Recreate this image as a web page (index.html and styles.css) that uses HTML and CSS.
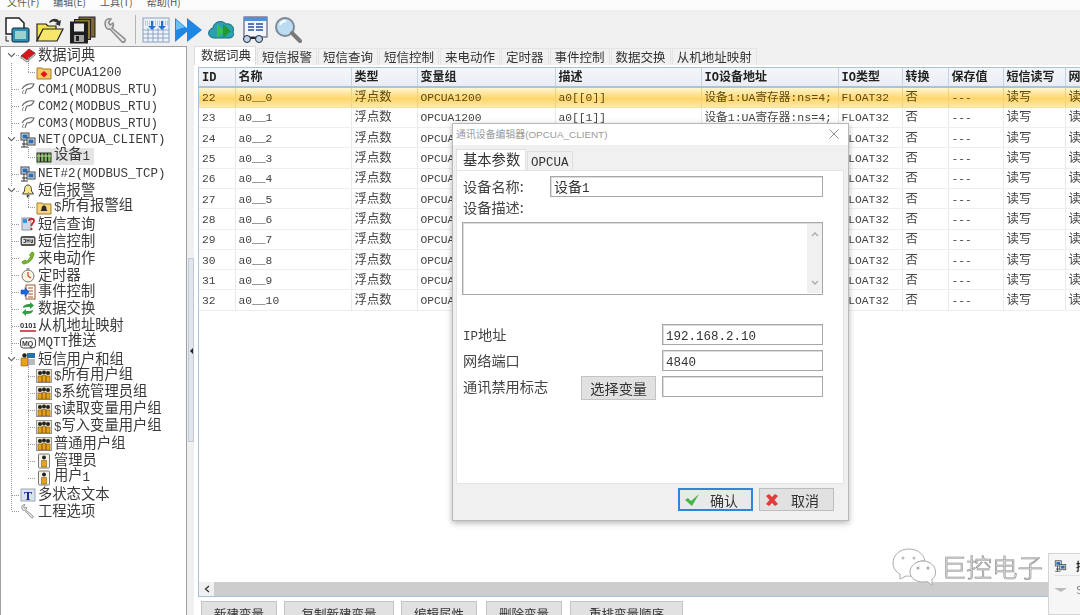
FILE: index.html
```html
<!DOCTYPE html>
<html>
<head>
<meta charset="utf-8">
<title>工程管理器</title>
<link rel="stylesheet" href="styles.css">
</head>
<body>

<svg class="defs" width="0" height="0">
  <defs>
    <symbol id="i-book" viewBox="0 0 16 16"><path d="M1 9 9 2l6 4-8 7z" fill="#d8141c" stroke="#7a1015" stroke-width=".7"/><path d="M1 9v2l6 4 8-7V6l-8 7z" fill="#e9e4d8" stroke="#555" stroke-width=".7"/></symbol>
    <symbol id="i-folder-red" viewBox="0 0 16 16"><path d="M1 4h5l1 1h8v10H1z" fill="#f5c862" stroke="#a9792a"/><path d="M8 7l3.500 3L8 13.500 4.500 10z" fill="#e0141c"/></symbol>
    <symbol id="i-folder-bell" viewBox="0 0 16 16"><path d="M1 4h5l1 1h8v10H1z" fill="#f5d67a" stroke="#a9792a"/><path d="M8 6.500c2 0 2.500 2 2.500 4l1 1.500h-7l1-1.500c0-2 .5-4 2.500-4z" fill="#2b2b2b"/></symbol>
    <symbol id="i-com" viewBox="0 0 16 16"><path d="M2 8c2-4 7-6 12-5-1 3-4 5-7 5-1 1-1 3-2 5" fill="#fff" stroke="#666" stroke-width="1.100"/><path d="M3 13c-1-2 0-3 1-4" fill="none" stroke="#777"/></symbol>
    <symbol id="i-net" viewBox="0 0 16 16"><rect x="1" y="1" width="8" height="7" fill="#dfe6ee" stroke="#444"/><rect x="2.500" y="2.500" width="5" height="4" fill="#2a6fb5"/><rect x="7" y="6" width="8" height="7" fill="#dfe6ee" stroke="#444"/><rect x="8.500" y="7.500" width="5" height="4" fill="#2a6fb5"/><path d="M2 12h5M4 8v7M1 15h7" stroke="#333" fill="none"/></symbol>
    <symbol id="i-dev" viewBox="0 0 16 16"><rect x="1" y="4" width="14" height="9" fill="#7fb35c" stroke="#333"/><path d="M4.500 4v9M8 4v9M11.500 4v9" stroke="#222" stroke-width="1.200"/><path d="M1 7h14" stroke="#b9dca0"/></symbol>
    <symbol id="i-bell" viewBox="0 0 16 16"><path d="M8 2c3 0 3.500 3 3.500 6l2 3h-11l2-3c0-3 .5-6 3.500-6z" fill="#f7e58a" stroke="#444"/><circle cx="8" cy="13" r="1.500" fill="#444"/></symbol>
    <symbol id="i-query" viewBox="0 0 16 16"><rect x="2" y="2" width="9" height="12" fill="#cfd9e6" stroke="#8896a8"/><rect x="3" y="3" width="4" height="4" fill="#3f8fd8"/><path d="M9 5c0-3 5-3 5 0 0 2-2.500 2-2.500 5M11.500 12v2" fill="none" stroke="#d0202a" stroke-width="1.800"/></symbol>
    <symbol id="i-cmd" viewBox="0 0 16 16"><rect x=".5" y="3" width="15" height="10" rx="2" fill="#555"/><rect x="2" y="5" width="12" height="6" fill="#ddd"/><path d="M3.500 6.500h2v3h-2M7 9.500v-3l1 1.500 1-1.500v3M11 6.500v3h1.500v-3" fill="none" stroke="#222" stroke-width=".8"/></symbol>
    <symbol id="i-phone" viewBox="0 0 16 16"><path d="M12 2c1 0 2 1 2 2-1 6-5 9-10 10-1 0-2-1-2-2l3-2 1.500 1c2-1 3-2.500 4-4.500L9.500 5z" fill="#76b82a" stroke="#4c8419" stroke-width=".7"/></symbol>
    <symbol id="i-clock" viewBox="0 0 16 16"><circle cx="8" cy="9" r="6" fill="#fdf6e2" stroke="#777"/><path d="M8 9V5M8 9l3 2" stroke="#d0402a" stroke-width="1.200"/><rect x="6.500" y="1" width="3" height="2" fill="#999"/></symbol>
    <symbol id="i-event" viewBox="0 0 16 16"><rect x="6" y="1" width="9" height="14" fill="#fff" stroke="#a0542a"/><path d="M8 4h5M8 7h5M8 10h5M8 13h5" stroke="#a0542a"/><path d="M1 6h4V3.500L9 8l-4 4.500V10H1z" fill="#1a6ae0" stroke="#0e3f91" stroke-width=".5"/></symbol>
    <symbol id="i-swap" viewBox="0 0 16 16"><path d="M3 7c0-3 3-4 7-4V1l4 3.500L10 8V6C7 6 5 6 3 7z" fill="#2ea043"/><path d="M13 9c0 3-3 4-7 4v2L2 11.500 6 8v2c3 0 5 0 7-1z" fill="#2ea043"/></symbol>
    <symbol id="i-bits" viewBox="0 0 16 16"><text x="0" y="10" font-family="Liberation Sans" font-size="7.500" font-weight="700" fill="#333">0101</text><path d="M0 13h16" stroke="#c0202a" stroke-width="1.500"/></symbol>
    <symbol id="i-mq" viewBox="0 0 16 16"><rect x=".5" y="3" width="15" height="10" rx="3" fill="#fff" stroke="#444"/><text x="2" y="11" font-family="Liberation Sans" font-size="7" font-weight="700" fill="#333">MQ</text></symbol>
    <symbol id="i-usergroup" viewBox="0 0 16 16"><rect x=".5" y="1.500" width="15" height="13" fill="#efe7cf" stroke="#999"/><circle cx="4" cy="5" r="2" fill="#222"/><circle cx="8" cy="4.500" r="2" fill="#222"/><circle cx="12" cy="5" r="2" fill="#222"/><path d="M2 8h4v6H2zM6 7.500h4V14H6zM10 8h4v6h-4z" fill="#e8a21a" stroke="#6b4a10" stroke-width=".5"/></symbol>
    <symbol id="i-user" viewBox="0 0 16 16"><rect x="2.500" y="1" width="11" height="14" rx="1" fill="#f6f3e8" stroke="#777"/><circle cx="8" cy="4.500" r="2" fill="#222"/><path d="M5.500 7.500h5V14h-5z" fill="#e8a21a" stroke="#6b4a10" stroke-width=".5"/></symbol>
    <symbol id="i-users" viewBox="0 0 16 16"><rect x="7" y="2" width="8" height="5" fill="#2a6fb5"/><path d="M8 9h7M8 11h7M8 13h7" stroke="#777"/><circle cx="4.500" cy="4.500" r="2.200" fill="#222"/><path d="M1 7h7v8H1z" fill="#e8a21a" stroke="#6b4a10" stroke-width=".5"/></symbol>
    <symbol id="i-text" viewBox="0 0 16 16"><rect x="1" y="2" width="14" height="12" fill="#d9e2ee" stroke="#9aa8ba"/><text x="4" y="12.500" font-family="Liberation Serif" font-size="12" font-weight="700" fill="#10207a">T</text></symbol>
    <symbol id="i-wrench" viewBox="0 0 28 28"><path d="M3 7c0-3 3-5 6-4L6.500 6.500 8 9l3-2c1 2 0 4-1 5l13 11c1 2-1 4-3 3L8 13C5 14 3 11 3 7z" fill="#e3e3e3" stroke="#8a8a8a" stroke-width="1.500"/></symbol>
  </defs>
</svg>

<div class="menu">
  <span>文件(F)</span><span>编辑(E)</span><span>工具(T)</span><span>帮助(H)</span>
</div>

<div class="toolbar">
  <svg class="tool" viewBox="0 0 28 28"><path d="M3 2h13l5 5v11H3z" fill="#fff" stroke="#222" stroke-width="1.500"/><path d="M3 20v5h3" fill="none" stroke="#222"/><rect x="9" y="12" width="17" height="14" rx="1.500" fill="#2f8fb0" stroke="#123"/><rect x="12" y="15" width="11" height="8" fill="#9bd2cf"/></svg>
  <svg class="tool" viewBox="0 0 28 28"><path d="M1 8h9l2 2h8v4H7L1 24z" fill="#f3e24f" stroke="#222" stroke-width="1.200"/><path d="M7 13h20l-6 12H1z" fill="#f6e66a" stroke="#222" stroke-width="1.200"/><path d="M13 6c3-4 8-4 10-1l2-1-1 6-5-2 2-1c-2-2-5-2-7 0" fill="#333"/></svg>
  <svg class="tool" viewBox="0 0 28 28"><rect x="10" y="1" width="16" height="20" fill="#7a6a2a" stroke="#222"/><rect x="5.500" y="3.500" width="16" height="20" fill="#8d7b30" stroke="#222"/><rect x="1.500" y="6" width="17" height="21" fill="#1e1e1e" stroke="#222"/><rect x="5" y="7.500" width="10" height="8" fill="#e8e8e8"/><rect x="5" y="19" width="10" height="7" fill="#a3a3a3"/><rect x="7" y="20" width="3" height="5" fill="#222"/></svg>
  <svg class="tool"><use href="#i-wrench"/></svg>
  <span class="tool-sep"></span>
  <svg class="tool" viewBox="0 0 28 28"><rect x="1" y="2" width="26" height="24" fill="#eef3fb" stroke="#8aa0c0"/><path d="M1 7h26" stroke="#b8c6da" stroke-dasharray="1 1" stroke-width="5"/><path d="M1 14h26M1 18h26M1 22h26M6 12v14M11 12v14M16 12v14M21 12v14" stroke="#7c94b8" stroke-width=".8"/><path d="M9 5v5h-3l4 4 4-4h-3V5zM19 5v5h-3l4 4 4-4h-3V5z" fill="#2270d0"/></svg>
  <svg class="tool" viewBox="0 0 28 28"><path d="M0 2l14 12L0 26z" fill="#1e86e4"/><path d="M12 2l15 12-15 12z" fill="#1e86e4"/><path d="M1 4l9 7-9 3z" fill="#6cc1f4"/></svg>
  <svg class="tool" viewBox="0 0 28 28"><path d="M6 22c-7 0-7-9-1-10 0-6 9-9 13-4 5-1 9 3 7 8 2 4-1 6-4 6z" fill="#2aa0b0" stroke="#156f80"/><path d="M9 8l8 7-8 7z" fill="#38c048"/><path d="M15 8l8 7-8 7z" fill="#1f9a33"/></svg>
  <svg class="tool" viewBox="0 0 28 28"><rect x="3" y="1" width="23" height="20" fill="#f2f5fb" stroke="#446"/><rect x="3" y="1" width="23" height="4" fill="#4f8fdc"/><path d="M7 8h6M15 8h7M7 11h6M15 11h7M7 14h6M15 14h7" stroke="#2a4fa0" stroke-width="1.500"/><circle cx="6" cy="23" r="3.500" fill="#b8d4ea" stroke="#223"/><circle cx="18" cy="23" r="3.500" fill="#b8d4ea" stroke="#223"/><path d="M9.500 22h5" stroke="#223" stroke-width="2"/></svg>
  <svg class="tool" viewBox="0 0 28 28"><circle cx="11" cy="11" r="9" fill="#bcdcf4" stroke="#7b8a98" stroke-width="2"/><path d="M6 9c1-3 4-4 6-4" stroke="#fff" stroke-width="2" fill="none"/><path d="M18 17l8 8" stroke="#7a7a7a" stroke-width="4" stroke-linecap="round"/></svg>
</div>

<div class="workspace">
  <div class="sidebar">
    <div class="tree">
      <div class="row"><span class="conn"><svg class="chev" viewBox="0 0 8 8"><path d="M1 2l3 3 3-3" fill="none" stroke="#666"/></svg></span><svg class="ti"><use href="#i-book"/></svg><span class="tx">数据词典</span></div>
      <div class="children c2">
        <div class="row sub"><span class="conn"></span><svg class="ti"><use href="#i-folder-red"/></svg><span class="tx"><span class="lat">OPCUA1200</span></span></div>
      </div>
      <div class="row"><span class="conn"></span><svg class="ti"><use href="#i-com"/></svg><span class="tx"><span class="lat">COM1(MODBUS_RTU)</span></span></div>
      <div class="row"><span class="conn"></span><svg class="ti"><use href="#i-com"/></svg><span class="tx"><span class="lat">COM2(MODBUS_RTU)</span></span></div>
      <div class="row"><span class="conn"></span><svg class="ti"><use href="#i-com"/></svg><span class="tx"><span class="lat">COM3(MODBUS_RTU)</span></span></div>
      <div class="row"><span class="conn"><svg class="chev" viewBox="0 0 8 8"><path d="M1 2l3 3 3-3" fill="none" stroke="#666"/></svg></span><svg class="ti"><use href="#i-net"/></svg><span class="tx"><span class="lat">NET(OPCUA_CLIENT)</span></span></div>
      <div class="children c2">
        <div class="row sub"><span class="conn"></span><span class="sel"><svg class="ti"><use href="#i-dev"/></svg><span class="tx">设备<span class="lat">1</span></span></span></div>
      </div>
      <div class="row"><span class="conn"></span><svg class="ti"><use href="#i-net"/></svg><span class="tx"><span class="lat">NET#2(MODBUS_TCP)</span></span></div>
      <div class="row"><span class="conn"><svg class="chev" viewBox="0 0 8 8"><path d="M1 2l3 3 3-3" fill="none" stroke="#666"/></svg></span><svg class="ti"><use href="#i-bell"/></svg><span class="tx">短信报警</span></div>
      <div class="children c2">
        <div class="row sub"><span class="conn"></span><svg class="ti"><use href="#i-folder-bell"/></svg><span class="tx"><span class="lat">$</span>所有报警组</span></div>
      </div>
      <div class="row"><span class="conn"></span><svg class="ti"><use href="#i-query"/></svg><span class="tx">短信查询</span></div>
      <div class="row"><span class="conn"></span><svg class="ti"><use href="#i-cmd"/></svg><span class="tx">短信控制</span></div>
      <div class="row"><span class="conn"></span><svg class="ti"><use href="#i-phone"/></svg><span class="tx">来电动作</span></div>
      <div class="row"><span class="conn"></span><svg class="ti"><use href="#i-clock"/></svg><span class="tx">定时器</span></div>
      <div class="row"><span class="conn"></span><svg class="ti"><use href="#i-event"/></svg><span class="tx">事件控制</span></div>
      <div class="row"><span class="conn"></span><svg class="ti"><use href="#i-swap"/></svg><span class="tx">数据交换</span></div>
      <div class="row"><span class="conn"></span><svg class="ti"><use href="#i-bits"/></svg><span class="tx">从机地址映射</span></div>
      <div class="row"><span class="conn"></span><svg class="ti"><use href="#i-mq"/></svg><span class="tx"><span class="lat">MQTT</span>推送</span></div>
      <div class="row"><span class="conn"><svg class="chev" viewBox="0 0 8 8"><path d="M1 2l3 3 3-3" fill="none" stroke="#666"/></svg></span><svg class="ti"><use href="#i-users"/></svg><span class="tx">短信用户和组</span></div>
      <div class="children c7">
        <div class="row sub"><span class="conn"></span><svg class="ti"><use href="#i-usergroup"/></svg><span class="tx"><span class="lat">$</span>所有用户组</span></div>
        <div class="row sub"><span class="conn"></span><svg class="ti"><use href="#i-usergroup"/></svg><span class="tx"><span class="lat">$</span>系统管理员组</span></div>
        <div class="row sub"><span class="conn"></span><svg class="ti"><use href="#i-usergroup"/></svg><span class="tx"><span class="lat">$</span>读取变量用户组</span></div>
        <div class="row sub"><span class="conn"></span><svg class="ti"><use href="#i-usergroup"/></svg><span class="tx"><span class="lat">$</span>写入变量用户组</span></div>
        <div class="row sub"><span class="conn"></span><svg class="ti"><use href="#i-usergroup"/></svg><span class="tx">普通用户组</span></div>
        <div class="row sub"><span class="conn"></span><svg class="ti"><use href="#i-user"/></svg><span class="tx">管理员</span></div>
        <div class="row sub"><span class="conn"></span><svg class="ti"><use href="#i-user"/></svg><span class="tx">用户<span class="lat">1</span></span></div>
      </div>
      <div class="row"><span class="conn"></span><svg class="ti"><use href="#i-text"/></svg><span class="tx">多状态文本</span></div>
      <div class="row"><span class="conn"></span><svg class="ti"><use href="#i-wrench"/></svg><span class="tx">工程选项</span></div>
    </div>
  </div>

  <div class="splitter">
    <div class="split-thumb"></div>
    <svg class="split-arrow" viewBox="0 0 5 8"><path d="M4 1v6L1 4z" fill="#222"/></svg>
  </div>

  <div class="main">
    <div class="tabs">
      <span class="tab on">数据词典</span>
      <span class="tab">短信报警</span>
      <span class="tab">短信查询</span>
      <span class="tab">短信控制</span>
      <span class="tab">来电动作</span>
      <span class="tab">定时器</span>
      <span class="tab">事件控制</span>
      <span class="tab">数据交换</span>
      <span class="tab">从机地址映射</span>
    </div>
    <div class="panel">
      <div class="frame">
        <div class="grid-wrap">
          <table class="grid">
            <colgroup>
              <col class="w-id"><col class="w-name"><col class="w-type"><col class="w-group"><col class="w-desc"><col class="w-addr"><col class="w-io"><col class="w-conv"><col class="w-save"><col class="w-sms"><col class="w-net">
            </colgroup>
            <tr><th>ID</th><th>名称</th><th>类型</th><th>变量组</th><th>描述</th><th>IO设备地址</th><th>IO类型</th><th>转换</th><th>保存值</th><th>短信读写</th><th>网络读写</th></tr>
            <tr class="cur"><td>22</td><td>a0__0</td><td>浮点数</td><td>OPCUA1200</td><td>a0[[0]]</td><td>设备1:UA寄存器:ns=4;</td><td>FLOAT32</td><td>否</td><td>---</td><td>读写</td><td>读写</td></tr>
            <tr><td>23</td><td>a0__1</td><td>浮点数</td><td>OPCUA1200</td><td>a0[[1]]</td><td>设备1:UA寄存器:ns=4;</td><td>FLOAT32</td><td>否</td><td>---</td><td>读写</td><td>读写</td></tr>
            <tr><td>24</td><td>a0__2</td><td>浮点数</td><td>OPCUA1200</td><td>a0[[2]]</td><td>设备1:UA寄存器:ns=4;</td><td>FLOAT32</td><td>否</td><td>---</td><td>读写</td><td>读写</td></tr>
            <tr><td>25</td><td>a0__3</td><td>浮点数</td><td>OPCUA1200</td><td>a0[[3]]</td><td>设备1:UA寄存器:ns=4;</td><td>FLOAT32</td><td>否</td><td>---</td><td>读写</td><td>读写</td></tr>
            <tr><td>26</td><td>a0__4</td><td>浮点数</td><td>OPCUA1200</td><td>a0[[4]]</td><td>设备1:UA寄存器:ns=4;</td><td>FLOAT32</td><td>否</td><td>---</td><td>读写</td><td>读写</td></tr>
            <tr><td>27</td><td>a0__5</td><td>浮点数</td><td>OPCUA1200</td><td>a0[[5]]</td><td>设备1:UA寄存器:ns=4;</td><td>FLOAT32</td><td>否</td><td>---</td><td>读写</td><td>读写</td></tr>
            <tr><td>28</td><td>a0__6</td><td>浮点数</td><td>OPCUA1200</td><td>a0[[6]]</td><td>设备1:UA寄存器:ns=4;</td><td>FLOAT32</td><td>否</td><td>---</td><td>读写</td><td>读写</td></tr>
            <tr><td>29</td><td>a0__7</td><td>浮点数</td><td>OPCUA1200</td><td>a0[[7]]</td><td>设备1:UA寄存器:ns=4;</td><td>FLOAT32</td><td>否</td><td>---</td><td>读写</td><td>读写</td></tr>
            <tr><td>30</td><td>a0__8</td><td>浮点数</td><td>OPCUA1200</td><td>a0[[8]]</td><td>设备1:UA寄存器:ns=4;</td><td>FLOAT32</td><td>否</td><td>---</td><td>读写</td><td>读写</td></tr>
            <tr><td>31</td><td>a0__9</td><td>浮点数</td><td>OPCUA1200</td><td>a0[[9]]</td><td>设备1:UA寄存器:ns=4;</td><td>FLOAT32</td><td>否</td><td>---</td><td>读写</td><td>读写</td></tr>
            <tr><td>32</td><td>a0__10</td><td>浮点数</td><td>OPCUA1200</td><td>a0[[10]]</td><td>设备1:UA寄存器:ns=4;</td><td>FLOAT32</td><td>否</td><td>---</td><td>读写</td><td>读写</td></tr>
          </table>
        </div>
        <div class="hscroll">
          <span class="hscroll-btn"><svg width="6" height="8" viewBox="0 0 6 8"><path d="M5 1L1.500 4 5 7" fill="none" stroke="#333" stroke-width="1.300"/></svg></span>
          <span class="hscroll-thumb"></span>
        </div>
      </div>
      <div class="actions">
        <button class="act a1">新建变量</button>
        <button class="act a2">复制新建变量</button>
        <button class="act a1">编辑属性</button>
        <button class="act a1">删除变量</button>
        <button class="act a3">重排变量顺序</button>
      </div>
    </div>
  </div>
</div>

<div class="dialog">
  <div class="dlg-title">
    <span>通讯设备编辑器(OPCUA_CLIENT)</span>
    <svg class="dlg-close" viewBox="0 0 10 10"><path d="M.5.500l9 9M9.500.500l-9 9" stroke="#888" stroke-width=".9"/></svg>
  </div>
  <div class="dlg-tabs">
    <span class="dlg-tab on">基本参数</span>
    <span class="dlg-tab"><span class="lat">OPCUA</span></span>
  </div>
  <div class="dlg-panel">
    <div class="f-name">
      <span class="lbl">设备名称:</span>
      <span class="inp inp-name">设备<span class="lat">1</span></span>
    </div>
    <div class="lbl f-desc">设备描述:</div>
    <div class="memo">
      <div class="memo-bar">
        <svg width="8" height="6" viewBox="0 0 8 6"><path d="M1 5l3-3 3 3" fill="none" stroke="#aaa" stroke-width="1.300"/></svg>
        <svg width="8" height="6" viewBox="0 0 8 6"><path d="M1 1l3 3 3-3" fill="none" stroke="#aaa" stroke-width="1.300"/></svg>
      </div>
    </div>
    <div class="f-row f-ip">
      <span class="lbl"><span class="lat">IP</span>地址</span>
      <span class="inp inp-r"><span class="lat">192.168.2.10</span></span>
    </div>
    <div class="f-row">
      <span class="lbl">网络端口</span>
      <span class="inp inp-r"><span class="lat">4840</span></span>
    </div>
    <div class="f-row">
      <span class="lbl">通讯禁用标志</span>
      <span class="pick">选择变量</span>
      <span class="inp inp-r"></span>
    </div>
  </div>
  <div class="dlg-foot">
    <button class="dlg-btn ok"><svg width="18" height="14" viewBox="0 0 18 14"><path d="M2 7l3-2 3 3 8-7-7 12z" fill="#45b649"/></svg><span>确认</span></button>
    <button class="dlg-btn"><svg width="16" height="14" viewBox="0 0 16 14"><path d="M2 3l3-2 3 3 3-3 3 2-3.500 4L14 11l-3 2-3-3-3 3-3-2 3.500-4z" fill="#e03c3c"/></svg><span>取消</span></button>
  </div>
</div>

<div class="mark">
  <svg width="44" height="38" viewBox="0 0 44 38"><path d="M17 1C8 1 1 7 1 15c0 5 3 9 7 11v5l6-3c2 0 3 .5 5 0-1-10 5-16 14-15C32 6 25 1 17 1z" fill="#fff" stroke="#aaa"/><path d="M31 13c-7 0-13 5-13 11s6 10 13 10c2 0 2 0 4-.5l5 3.500v-6c3-2 3.500-4 3.500-7 0-6-5.500-11-12.500-11z" fill="#fff" stroke="#aaa"/><circle cx="11" cy="10" r="1.500" fill="#bbb"/><circle cx="22" cy="10" r="1.500" fill="#bbb"/><circle cx="26" cy="20" r="1.500" fill="#aaa"/><circle cx="36" cy="20" r="1.500" fill="#aaa"/></svg>
  <span class="mark-text">巨控电子</span>
</div>

<div class="popup">
  <div class="pop-top"><svg width="13" height="12"><use href="#i-net"/></svg><b>描</b></div>
  <div class="pop-bot"><svg width="13" height="6" viewBox="0 0 13 6"><path d="M0 2h13l-6 4z" fill="#bbb"/></svg><span>S</span></div>
</div>

</body>
</html>
```

FILE: styles.css
```css
* {
  box-sizing: border-box;
}
html, body {
  margin: 0;
  height: 615px;
  overflow: hidden;
}
body {
  position: relative;
  width: 1080px;
  background: #f0f0f0;
  color: #333;
  font-family: "Noto Sans CJK SC", "Liberation Sans", sans-serif;
  filter: blur(.3px);
}
.defs {
  position: absolute;
}
.lat {
  font-family: "Liberation Mono", monospace;
}

/* menu + toolbar */
.menu {
  height: 10px;
  background: #fcfcfc;
  overflow: hidden;
  display: flex;
  gap: 14px;
  padding-left: 7px;
  font-size: 10px;
  line-height: 11px;
  color: #555;
}
.menu span {
  margin-top: -4px;
}
.toolbar {
  height: 36px;
  display: flex;
  align-items: center;
  gap: 5px;
  padding: 3px 0 0 3px;
}
.tool {
  width: 28px;
  height: 28px;
  flex: none;
}
.tool-sep {
  width: 1px;
  height: 29px;
  margin-right: 1px;
  background: #b5b5b5;
}

/* tree */
.workspace {
  display: flex;
  height: 569px;
}
.sidebar {
  width: 187px;
  background: #fff;
  border: 1px solid #a0a0a0;
  border-bottom: 0;
  overflow: hidden;
}
.tree {
  position: relative;
}
.tree::before {
  content: "";
  position: absolute;
  left: 10px;
  top: 16px;
  height: 447px;
  border-left: 1px dotted #999;
}
.row {
  display: flex;
  align-items: center;
  height: 16.9px;
  position: relative;
}
.row.sub {
  padding-left: 16px;
}
.conn {
  position: relative;
  width: 19px;
  height: 100%;
  flex: none;
}
.conn::after {
  content: "";
  position: absolute;
  left: 11px;
  right: 1px;
  top: 50%;
  border-top: 1px dotted #999;
}
.chev {
  position: absolute;
  left: 6px;
  top: 4px;
  width: 9px;
  height: 9px;
  background: #fff;
  z-index: 1;
}
.ti {
  width: 16px;
  height: 16px;
  flex: none;
}
.tx {
  margin: 0 0 4px 2px;
  font-size: 14.3px;
  line-height: 17px;
  white-space: nowrap;
  color: #3a3a3a;
}
.tx .lat {
  position: relative;
  top: 1px;
  font-size: 12.5px;
}
.sel {
  display: flex;
  align-items: center;
  width: 58px;
  height: 100%;
  background: #e4e4e4;
}
.children {
  position: relative;
}
.children::before {
  content: "";
  position: absolute;
  left: 27px;
  top: -7px;
  border-left: 1px dotted #999;
}
.c2::before {
  height: 15px;
}
.c7::before {
  height: 109px;
}

.splitter {
  position: relative;
  width: 7px;
  flex: none;
}
.split-thumb {
  position: absolute;
  left: 1px;
  top: 212px;
  width: 6px;
  height: 184px;
  background: #dfe6ef;
  border: 1px solid #c2c8d0;
}
.split-arrow {
  position: absolute;
  left: 2px;
  top: 301px;
  width: 5px;
  height: 8px;
}

/* right side */
.main {
  flex: 1;
  min-width: 0;
  display: flex;
  flex-direction: column;
}
.tabs {
  display: flex;
  height: 19px;
  gap: 1px;
}
.tab {
  padding: 0 4px;
  margin-top: 2px;
  font-size: 12.5px;
  line-height: 15px;
  background: #f1f1f1;
  border: 1px solid #e4e4e4;
  border-bottom: 0;
  white-space: nowrap;
  color: #333;
}
.tab.on {
  margin-top: 0;
  padding: 0 4px 0 6px;
  line-height: 16px;
  background: #fff;
  border-color: #dcdcdc;
}
.panel {
  flex: 1;
  min-height: 0;
  background: #fff;
  padding: 2px 0 0 4px;
}
.frame {
  height: 530px;
  border: 1px solid #a9c3dd;
  border-right: 0;
  display: flex;
  flex-direction: column;
}
.grid-wrap {
  flex: 1;
  min-height: 0;
  overflow: hidden;
}
.grid {
  table-layout: fixed;
  border-collapse: collapse;
  width: 940px;
}
.w-id { width: 36px; }
.w-name { width: 116px; }
.w-type { width: 66px; }
.w-group { width: 138px; }
.w-desc { width: 146px; }
.w-addr { width: 137px; }
.w-io { width: 64px; }
.w-conv { width: 46px; }
.w-save { width: 55px; }
.w-sms { width: 62px; }
.w-net { width: 74px; }
.grid th, .grid td {
  height: 20.3px;
  padding: 2px 0 0 3px;
  text-align: left;
  overflow: hidden;
  white-space: nowrap;
  border-right: 1px solid #e6e9ee;
  border-bottom: 1px solid #eeeeee;
  line-height: 16px;
  font-family: "Liberation Mono", "Noto Sans CJK SC", monospace;
  font-size: 11.3px;
  color: #444;
}
/* these columns hold only Chinese, drawn a bit larger than the Latin ones */
.grid td:nth-child(3), .grid td:nth-child(8), .grid td:nth-child(10), .grid td:nth-child(11) {
  font-size: 12.4px;
}
.grid td:nth-child(6) {
  font-size: 11.6px;
}
.grid th {
  height: 19px;
  background: linear-gradient(#f4f6f9, #e9edf3);
  border-right: 1px solid #c4d4e6;
  border-bottom: 2px solid #a9c3dd;
  font-size: 12px;
  font-weight: 700;
  color: #222;
}
.grid tr.cur td {
  background: linear-gradient(#fff6d0, #ffd66c 55%, #fde9a4);
  border-right-color: #f0d27a;
  border-bottom-color: #efe3a8;
  color: #5a4a10;
}
.hscroll {
  height: 14px;
  display: flex;
  flex: none;
  background: #f0f0f0;
}
.hscroll-btn {
  width: 15px;
  display: flex;
  align-items: center;
  justify-content: center;
}
.hscroll-thumb {
  flex: 1;
  background: #cdcdcd;
}
.actions {
  display: flex;
  gap: 7px;
  padding: 4px 0 0 3px;
}
.act {
  height: 26px;
  padding: 0;
  flex: none;
  background: #e1e1e1;
  border: 1px solid #c4c4c4;
  font-family: inherit;
  font-size: 12.5px;
  line-height: 20px;
  color: #333;
}
.act:nth-child(4) {
  margin-left: 2px;
}
.act:nth-child(5) {
  margin-left: 1px;
}
.a1 { width: 76px; }
.a2 { width: 110px; }
.a3 { width: 113px; }

/* dialog */
.dialog {
  position: absolute;
  left: 452px;
  top: 123px;
  width: 397px;
  height: 398px;
  background: #f0f0f0;
  border: 1px solid #b9b9b9;
  box-shadow: 0 2px 6px rgba(0, 0, 0, .3);
  display: flex;
  flex-direction: column;
}
.dlg-title {
  height: 21px;
  background: #fff;
  display: flex;
  align-items: center;
  justify-content: space-between;
  padding: 0 9px 2px 3px;
  font-family: "Liberation Sans", "Noto Sans CJK SC", sans-serif;
  font-size: 9.9px;
  color: #9a9a9a;
}
.dlg-close {
  width: 10px;
  height: 10px;
}
.dlg-tabs {
  display: flex;
  gap: 1px;
  height: 25px;
  padding: 4px 0 0 3px;
  align-items: flex-end;
}
.dlg-tab {
  height: 19px;
  padding: 0 3px;
  font-size: 12.5px;
  line-height: 17px;
  background: #f0f0f0;
  border: 1px solid #e0e0e0;
  border-bottom: 0;
}
.dlg-tab.on {
  width: 70px;
  height: 21px;
  padding: 0 0 0 6px;
  font-size: 14.3px;
  line-height: 17px;
  white-space: nowrap;
  background: #fff;
}
.dlg-panel {
  height: 314px;
  margin: 0 4px 0 3px;
  padding: 5px 20px 0 5px;
  background: #fff;
  border: 1px solid #e4e4e4;
  font-size: 14px;
  color: #444;
}
.lbl {
  margin-left: 1px;
  font-size: 14.2px;
  line-height: 21px;
  white-space: nowrap;
}
.lbl .lat, .inp .lat {
  font-size: 12.5px;
}
.inp {
  display: block;
  height: 21px;
  padding-left: 3px;
  background: #fff;
  border: 1px solid #a8a8a8;
  box-shadow: inset 1px 1px 0 #ddd;
  line-height: 18px;
  font-size: 14px;
  color: #333;
}
.f-name {
  display: flex;
  justify-content: space-between;
}
.inp-name {
  width: 273px;
}
.memo {
  display: flex;
  justify-content: flex-end;
  height: 73px;
  margin-top: 4px;
  border: 1px solid #a8a8a8;
  box-shadow: inset 1px 1px 0 #ddd;
}
.memo-bar {
  width: 15px;
  margin: 1px 0;
  background: #f0f0f0;
  display: flex;
  flex-direction: column;
  align-items: center;
  justify-content: space-between;
  padding: 7px 0;
}
.f-row {
  display: flex;
  align-items: flex-start;
  height: 21px;
  margin-bottom: 5px;
}
.f-ip {
  margin-top: 29px;
}
.inp-r {
  width: 161px;
  margin-left: auto;
}
.pick {
  width: 75px;
  height: 24px;
  margin-left: 33px;
  flex: none;
  background: #e1e1e1;
  border: 1px solid #c4c4c4;
  text-align: center;
  font-size: 14.2px;
  line-height: 22px;
  color: #333;
}
.dlg-foot {
  display: flex;
  justify-content: flex-end;
  gap: 6px;
  padding: 4px 14px 0 0;
}
.dlg-btn {
  width: 75px;
  height: 23px;
  padding: 0 0 0 4px;
  background: #e1e1e1;
  border: 1px solid #bdbdbd;
  display: flex;
  align-items: center;
  font-family: inherit;
  font-size: 14px;
  color: #333;
}
.dlg-btn span {
  margin-left: 11px;
}
.dlg-btn.ok {
  border: 2px solid #2f86d6;
  background: #e9e9e9;
  padding-left: 3px;
}
.dlg-btn.ok span {
  margin-left: 9px;
}

/* watermark and the popup at the corner */
.mark {
  position: absolute;
  left: 892px;
  top: 548px;
  display: flex;
  align-items: center;
  gap: 5px;
}
.mark-text {
  font-family: "Noto Sans CJK SC", sans-serif;
  font-size: 25.5px;
  line-height: 36px;
  margin-top: -3px;
  font-weight: 300;
  color: #fff;
  -webkit-text-stroke: .7px #8a8a8a;
}
.popup {
  position: absolute;
  left: 1048px;
  top: 553px;
  width: 40px;
  height: 62px;
  background: #f6f6f6;
  border: 1px solid #d5d5d5;
  padding: 3px 0 0 5px;
  font-size: 11px;
  color: #888;
}
.pop-top {
  display: flex;
  align-items: center;
  gap: 9px;
  height: 19px;
  border-bottom: 1px solid #e2e2e2;
  color: #222;
}
.pop-bot {
  display: flex;
  align-items: center;
  gap: 9px;
  height: 26px;
}
```
